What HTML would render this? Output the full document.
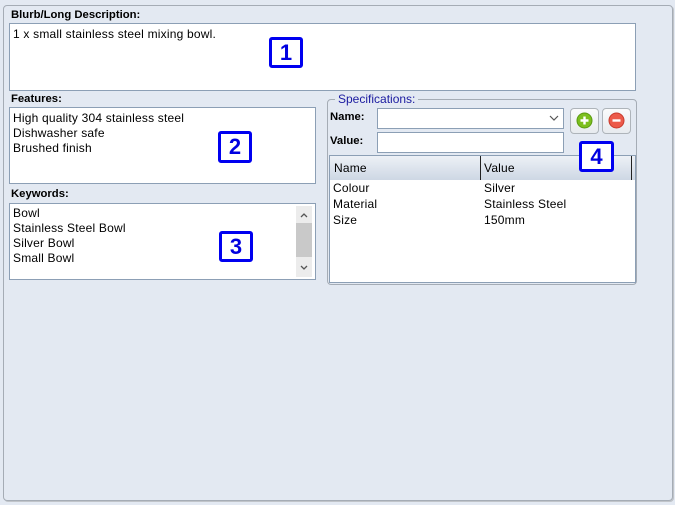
<!DOCTYPE html>
<html><head><style>
*{box-sizing:border-box;margin:0;padding:0}
body{width:675px;height:505px;background:#e3e9f2;font-family:"Liberation Sans",sans-serif;font-size:12px;color:#000;position:relative;overflow:hidden}
.a{position:absolute}
.panel{left:3px;top:5px;width:670px;height:496px;border:1px solid #a5acb5;border-radius:4px;box-shadow:1px 1px 0 #c0c4c9}
.lbl{font-weight:bold;font-size:11.3px}
.ta{background:#fff;border:1px solid #8c9fb5;padding:3px 3px;line-height:15px;letter-spacing:0.2px}
.badge{border:3px solid #0000f0;background:#fff;border-radius:3px;color:#0000e0;font-weight:bold;font-size:22px;text-align:center;line-height:25px}
.field{background:#fff;border:1px solid #8c9fb5}
.btn{border:1px solid #aeb4ba;border-radius:4px;background:linear-gradient(#fafbfc,#e7ebef)}
.t{letter-spacing:0.2px}
</style></head><body>
<div class="a panel"></div>
<div class="a lbl" style="left:11px;top:9px">Blurb/Long Description:</div>
<div class="a ta" style="left:9px;top:23px;width:627px;height:68px">1 x small stainless steel mixing bowl.</div>
<div class="a badge" style="left:269px;top:37px;width:34px;height:31px">1</div>

<div class="a lbl" style="left:11px;top:93px">Features:</div>
<div class="a ta" style="left:9px;top:107px;width:307px;height:77px">High quality 304 stainless steel<br>Dishwasher safe<br>Brushed finish</div>
<div class="a badge" style="left:218px;top:131px;width:34px;height:32px">2</div>

<div class="a lbl" style="left:11px;top:188px">Keywords:</div>
<div class="a ta" style="left:9px;top:203px;width:307px;height:77px;padding-top:2px">Bowl<br>Stainless Steel Bowl<br>Silver Bowl<br>Small Bowl</div>
<div class="a" style="left:296px;top:206px;width:16px;height:71px;background:#ececec"></div>
<div class="a" style="left:296px;top:223px;width:16px;height:34px;background:#c9c9c9"></div>
<svg class="a" style="left:296px;top:206px" width="16" height="71"><path d="M5 11l3-3 3 3M5 60l3 3 3-3" fill="none" stroke="#555" stroke-width="1.3"/></svg>
<div class="a badge" style="left:219px;top:231px;width:34px;height:31px">3</div>

<div class="a" style="left:327px;top:99px;width:310px;height:186px;border:1px solid #a5acb5;border-radius:4px"></div>
<div class="a" style="left:335px;top:92px;padding:0 3px;background:#e3e9f2;color:#1a1aa0;font-size:12px" class="t">Specifications:</div>
<div class="a lbl" style="left:330px;top:111px">Name:</div>
<div class="a field" style="left:377px;top:108px;width:187px;height:21px"></div>
<svg class="a" style="left:549px;top:114px" width="10" height="8"><path d="M1 2l4 4 4-4" fill="none" stroke="#555" stroke-width="1.2"/></svg>
<div class="a lbl" style="left:330px;top:135px">Value:</div>
<div class="a field" style="left:377px;top:132px;width:187px;height:21px"></div>
<div class="a btn" style="left:570px;top:108px;width:29px;height:26px"></div>
<div class="a btn" style="left:602px;top:108px;width:29px;height:26px"></div>
<svg class="a" style="left:576px;top:112px" width="17" height="17"><circle cx="8.5" cy="8.5" r="7.5" fill="#7cbf1e" stroke="#5a9a10"/><path d="M8.5 4.5v8M4.5 8.5h8" stroke="#fff" stroke-width="2.4"/></svg>
<svg class="a" style="left:608px;top:112px" width="17" height="17"><circle cx="8.5" cy="8.5" r="7.5" fill="#ec5a4a" stroke="#c83a2c"/><path d="M4.5 8.5h8" stroke="#fff" stroke-width="2.4"/></svg>

<div class="a" style="left:329px;top:155px;width:307px;height:128px;background:#fff;border:1px solid #8c9fb5"></div>
<div class="a" style="left:330px;top:156px;width:305px;height:24px;background:linear-gradient(#edf1f6,#cdd7e4)"></div>
<div class="a" style="left:480px;top:156px;width:1px;height:24px;background:#222"></div>
<div class="a" style="left:631px;top:156px;width:1px;height:24px;background:#222"></div>
<div class="a t" style="left:334px;top:161px">Name</div>
<div class="a t" style="left:484px;top:161px">Value</div>
<div class="a t" style="left:333px;top:180px;line-height:16px">Colour<br>Material<br>Size</div>
<div class="a t" style="left:484px;top:180px;line-height:16px">Silver<br>Stainless Steel<br>150mm</div>
<div class="a badge" style="left:579px;top:141px;width:35px;height:31px">4</div>
</body></html>
